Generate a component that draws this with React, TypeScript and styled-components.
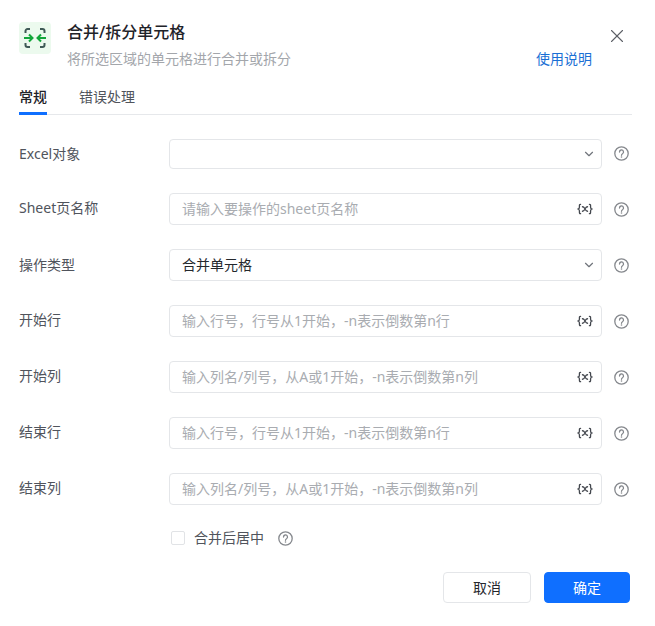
import React from 'react';
import styled, { createGlobalStyle } from 'styled-components';
import { ChevronDown, X } from 'lucide-react';

const GlobalStyle = createGlobalStyle`
  html, body { margin: 0; padding: 0; background: #fff; }
  body { font-family: "Noto Sans", "Noto Sans CJK SC", sans-serif; }
`;

const Dialog = styled.div`
  width: 655px;
  height: 626px;
  box-sizing: border-box;
  padding: 22px 23px 0 19px;
  overflow: hidden;
`;

const Header = styled.header`
  display: flex;
  height: 54px;
`;

const Logo = styled.div`
  width: 32px;
  height: 32px;
  flex: none;
  margin-right: 16px;
  border-radius: 4px;
  background: #ecfaee;
  display: flex;
  align-items: center;
  justify-content: center;
`;

const HeadText = styled.div`
  flex: 1;
  min-width: 0;
`;

const Title = styled.h1`
  margin: 1px 0 0;
  font-size: 16px;
  line-height: 18px;
  font-weight: 500;
  color: #1f2329;
`;

const Sub = styled.div`
  margin-top: 8px;
  font-size: 14px;
  line-height: 20px;
  color: #a3a6ab;
`;

const HeadSide = styled.div`
  display: flex;
  flex-direction: column;
  align-items: flex-end;
`;

const CloseButton = styled.button`
  border: 0;
  background: none;
  padding: 0;
  margin: 3px 4px 0 0;
  width: 22px;
  height: 22px;
  color: #5c5f66;
  display: flex;
`;

const HelpLink = styled.a`
  margin: 2px 40px 0 0;
  font-size: 14px;
  line-height: 20px;
  color: #1a6fd4;
`;

const Tabs = styled.nav`
  display: flex;
  gap: 32px;
  height: 38px;
  border-bottom: 1px solid #e6e8eb;
  margin-bottom: 24px;
`;

const Tab = styled.div<{ $active?: boolean }>`
  position: relative;
  font-size: 14px;
  line-height: 42px;
  font-weight: ${p => (p.$active ? 500 : 400)};
  color: ${p => (p.$active ? '#1f2329' : '#50545c')};
  &::after {
    content: '';
    display: ${p => (p.$active ? 'block' : 'none')};
    position: absolute;
    left: 0;
    right: 0;
    bottom: -1px;
    height: 3px;
    background: #0f6fff;
  }
`;

const Form = styled.div`
  display: flex;
  flex-direction: column;
  gap: 24px;
`;

const Row = styled.div`
  display: flex;
  align-items: center;
`;

const Label = styled.label<{ $raised?: boolean }>`
  width: 150px;
  flex: none;
  font-size: 14px;
  color: #50545c;
  padding-bottom: ${p => (p.$raised ? 4 : 2)}px;
`;

const Field = styled.div<{ $short?: boolean }>`
  width: 433px;
  height: ${p => (p.$short ? 30 : 32)}px;
  box-sizing: border-box;
  flex: none;
  border: 1px solid #e4e6e9;
  border-radius: 4px;
  padding: 0 8px 0 12px;
  display: flex;
  align-items: center;
  justify-content: space-between;
  font-size: 14px;
`;

const Placeholder = styled.span`
  color: #a9acb1;
  padding-bottom: 3px;
`;

const Value = styled.span`
  color: #24272c;
  padding-bottom: 2px;
`;

const Arrow = styled(ChevronDown)`
  color: #70747b;
  margin: 0 -3px 0 auto;
`;

const HelpIcon = styled.svg<{ $raised?: boolean }>`
  flex: none;
  margin: 0 0 ${p => (p.$raised ? 2 : 0)}px 12px;
  width: 15px;
  height: 15px;
  color: #85888d;
`;

const CheckRow = styled.div`
  display: flex;
  align-items: center;
  margin: 22px 0 0 152px;
  font-size: 14px;
  color: #50545c;
  & > svg {
    margin-left: 14px;
  }
`;

const CheckText = styled.span`
  padding-bottom: 2px;
`;

const Checkbox = styled.span`
  width: 14px;
  height: 14px;
  box-sizing: border-box;
  border: 1px solid #e1e3e6;
  border-radius: 2px;
  margin-right: 9px;
`;

const Footer = styled.footer`
  display: flex;
  justify-content: flex-end;
  gap: 13px;
  margin: 23px 2px 0 0;
`;

const Button = styled.button<{ $primary?: boolean }>`
  width: ${p => (p.$primary ? 86 : 88)}px;
  height: 31px;
  box-sizing: border-box;
  border-radius: 4px;
  font: inherit;
  font-size: 14px;
  padding: 0 0 2px;
  border: 1px solid ${p => (p.$primary ? '#0f6fff' : '#e4e6e9')};
  background: ${p => (p.$primary ? '#0f6fff' : '#fff')};
  color: ${p => (p.$primary ? '#fff' : '#24272c')};
`;

const VarIcon = styled.svg`
  width: 16px;
  height: 12px;
  color: #42464d;
  flex: none;
`;

const Help = ({ raised }: { raised?: boolean }) => (
  <HelpIcon $raised={raised} viewBox="0 0 15 15" fill="none" stroke="currentColor">
    <circle cx="7.5" cy="7.5" r="6.7" strokeWidth="1.3" />
    <path d="M5.500 6a2 2 0 1 1 3 1.700c-.7.4-1 .8-1 1.600" strokeWidth="1.3" strokeLinecap="round" />
    <circle cx="7.5" cy="11" r=".8" fill="currentColor" stroke="none" />
  </HelpIcon>
);

const Var = () => (
  <VarIcon viewBox="0 0 17 12" fill="none" stroke="currentColor" strokeWidth="1.4" strokeLinecap="round">
    <path d="M3.800 1C2.400 1 2.600 2 2.600 3.500S2.400 5.600 1.300 6c1.100.4 1.300 1 1.300 2.500S2.400 11 3.800 11" />
    <path d="M13.200 1c1.400 0 1.200 1 1.200 2.500s.2 2.100 1.300 2.500c-1.100.4-1.300 1-1.300 2.500s.2 2.500-1.200 2.500" />
    <path d="M5.800 3.600c1.600 0 2 1.200 2.700 2.400s1.100 2.400 2.700 2.400M11.200 3.600C9.600 3.600 9.200 4.800 8.500 6S7.400 8.400 5.800 8.400" />
  </VarIcon>
);

const rows = [
  { label: 'Sheet页名称', placeholder: '请输入要操作的sheet页名称' },
  { label: '操作类型', value: '合并单元格' },
  { label: '开始行', placeholder: '输入行号，行号从1开始，-n表示倒数第n行' },
  { label: '开始列', placeholder: '输入列名/列号，从A或1开始，-n表示倒数第n列' },
  { label: '结束行', placeholder: '输入行号，行号从1开始，-n表示倒数第n行' },
  { label: '结束列', placeholder: '输入列名/列号，从A或1开始，-n表示倒数第n列' },
];

export default function App() {
  return (
    <Dialog>
      <GlobalStyle />
      <Header>
        <Logo>
          <svg width="24" height="22" viewBox="0 0 24 22" fill="none" strokeWidth="2">
            <path
              d="M7 2H4.500A2 2 0 0 0 2.500 4v2M7 20H4.500a2 2 0 0 1-2-2v-2M17 2h2.500a2 2 0 0 1 2 2v2M17 20h2.500a2 2 0 0 0 2-2v-2"
              stroke="#3f5a56"
            />
            <path d="M1 11h8M6 7.500 9.500 11 6 14.500M23 11h-8M18 7.500 14.500 11l3.500 3.500" stroke="#12a63a" />
          </svg>
        </Logo>
        <HeadText>
          <Title>合并/拆分单元格</Title>
          <Sub>将所选区域的单元格进行合并或拆分</Sub>
        </HeadText>
        <HeadSide>
          <CloseButton>
            <X size={22} strokeWidth={1.2} />
          </CloseButton>
          <HelpLink>使用说明</HelpLink>
        </HeadSide>
      </Header>
      <Tabs>
        <Tab $active>常规</Tab>
        <Tab>错误处理</Tab>
      </Tabs>
      <Form>
        <Row>
          <Label>Excel对象</Label>
          <Field $short>
            <Arrow size={14} />
          </Field>
          <Help raised />
        </Row>
        {rows.map(r => (
          <Row key={r.label}>
            <Label $raised={!r.value}>{r.label}</Label>
            <Field>
              {r.value ? <Value>{r.value}</Value> : <Placeholder>{r.placeholder}</Placeholder>}
              {r.value ? <Arrow size={14} /> : <Var />}
            </Field>
            <Help />
          </Row>
        ))}
      </Form>
      <CheckRow>
        <Checkbox />
        <CheckText>合并后居中</CheckText>
        <Help />
      </CheckRow>
      <Footer>
        <Button>取消</Button>
        <Button $primary>确定</Button>
      </Footer>
    </Dialog>
  );
}
